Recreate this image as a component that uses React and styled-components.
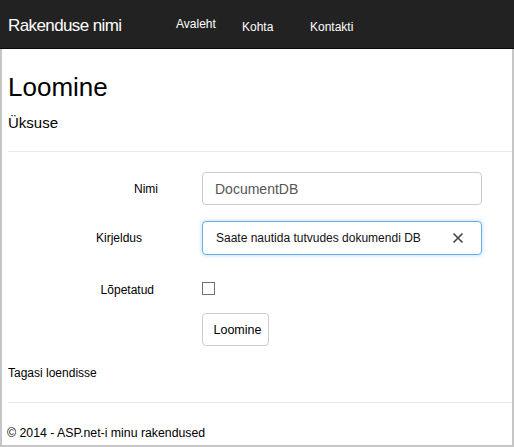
import React from 'react'
import styled, { createGlobalStyle } from 'styled-components'

const GlobalStyle = createGlobalStyle`
  body {
    margin: 0;
    font-family: "Liberation Sans", Arial, sans-serif;
    background: #fff;
  }
`

const Navbar = styled.nav`
  height: 48px;
  background-color: #222;
  border-bottom: 1px solid #080808;
  display: flex;
  align-items: center;
  padding-left: 8px;
`
const Brand = styled.a`
  color: #fff;
  font-size: 17px;
  letter-spacing: -0.6px;
  width: 168px;
  margin-top: 3px;
`
const NavLinks = styled.ul`
  display: flex;
  align-self: stretch;
  list-style: none;
  margin: 0;
  padding: 0;
`
const NavItem = styled.li`
  color: #fff;
  font-size: 12px;
  line-height: 14px;
  width: ${p => p.w}px;
  padding-top: ${p => (p.raised ? 17 : 20)}px;
`
const Main = styled.main`
  height: 396px;
  border: 2px solid #c6c6c6;
  border-top: none;
  padding-left: 6px;
  box-sizing: content-box;
`
const Title = styled.h2`
  font-size: 26px;
  font-weight: normal;
  line-height: 30px;
  margin: 0;
  padding-top: 23px;
  color: #000;
`
const Subtitle = styled.h4`
  font-size: 15px;
  font-weight: normal;
  line-height: 20px;
  margin: 11px 0 0;
  color: #000;
`
const Rule = styled.hr`
  border: none;
  border-top: 1px solid #e8e8e8;
  margin: ${p => p.top}px 0 0;
`
const Form = styled.form`
  display: grid;
  grid-template-columns: 154px 280px;
  column-gap: 40px;
  align-items: center;
  margin-top: 20px;
`
const Label = styled.label`
  font-size: 12px;
  color: #000;
  text-align: right;
  padding-right: ${p => p.pad}px;
  margin-top: ${p => p.top || 0}px;
`
const Field = styled.div`
  margin-top: ${p => p.top || 0}px;
  position: relative;
`
const Input = styled.input`
  box-sizing: border-box;
  width: 280px;
  height: ${p => p.h || 33}px;
  border: 1px solid ${p => (p.focused ? '#66afe9' : '#ccc')};
  box-shadow: ${p => (p.focused ? '0 0 4px rgba(102,175,233,0.5)' : 'none')};
  border-radius: 4px;
  padding: 0 36px 0 ${p => (p.focused ? 13 : 12)}px;
  font-family: inherit;
  font-size: ${p => p.size}px;
  color: ${p => p.color};
  outline: none;
`
const Clear = styled.span`
  position: absolute;
  right: 18px;
  top: 11px;
  width: 12px;
  height: 12px;
  display: flex;
`
const Check = styled.input`
  appearance: none;
  margin: 0;
  width: 13px;
  height: 13px;
  border: 1px solid #707070;
  background: #fff;
`
const Button = styled.button`
  width: 67px;
  height: 33px;
  background: #fff;
  border: 1px solid #ccc;
  border-radius: 4px;
  font-family: inherit;
  font-size: 12.5px;
  color: #000;
  padding: 0 0 0 4px;
`
const Back = styled.a`
  display: block;
  font-size: 12px;
  color: #000;
  margin-top: 19px;
  line-height: 16px;
`
const Footer = styled.footer`
  font-size: 12.3px;
  color: #000;
  margin: 22px 0 0 -1px;
  line-height: 16px;
`

const App = () => {
  return (
    <>
      <GlobalStyle />
      <Navbar>
        <Brand>Rakenduse nimi</Brand>
        <NavLinks>
          <NavItem w={66} raised>Avaleht</NavItem>
          <NavItem w={68}>Kohta</NavItem>
          <NavItem w={60}>Kontakti</NavItem>
        </NavLinks>
      </Navbar>
      <Main>
        <Title>Loomine</Title>
        <Subtitle>Üksuse</Subtitle>
        <Rule top={18} />
        <Form>
          <Label pad={4}>Nimi</Label>
          <Field>
            <Input defaultValue="DocumentDB" size={14} color="#555" />
          </Field>
          <Label pad={20} top={16}>Kirjeldus</Label>
          <Field top={16}>
            <Input focused h={34} defaultValue="Saate nautida tutvudes dokumendi DB" size={12} color="#111" />
            <Clear>
              <svg width="12" height="12" viewBox="0 0 12 12">
                <path d="M1.5 1.5 L10.5 10.5 M10.5 1.5 L1.5 10.5" stroke="#444" strokeWidth="1.6" />
              </svg>
            </Clear>
          </Field>
          <Label pad={8} top={26}>Lõpetatud</Label>
          <Field top={26}>
            <Check type="checkbox" />
          </Field>
          <span />
          <Field top={14}>
            <Button type="button">Loomine</Button>
          </Field>
        </Form>
        <Back>Tagasi loendisse</Back>
        <Rule top={21} />
        <Footer>© 2014 - ASP.net-i minu rakendused</Footer>
      </Main>
    </>
  )
}

export default App
